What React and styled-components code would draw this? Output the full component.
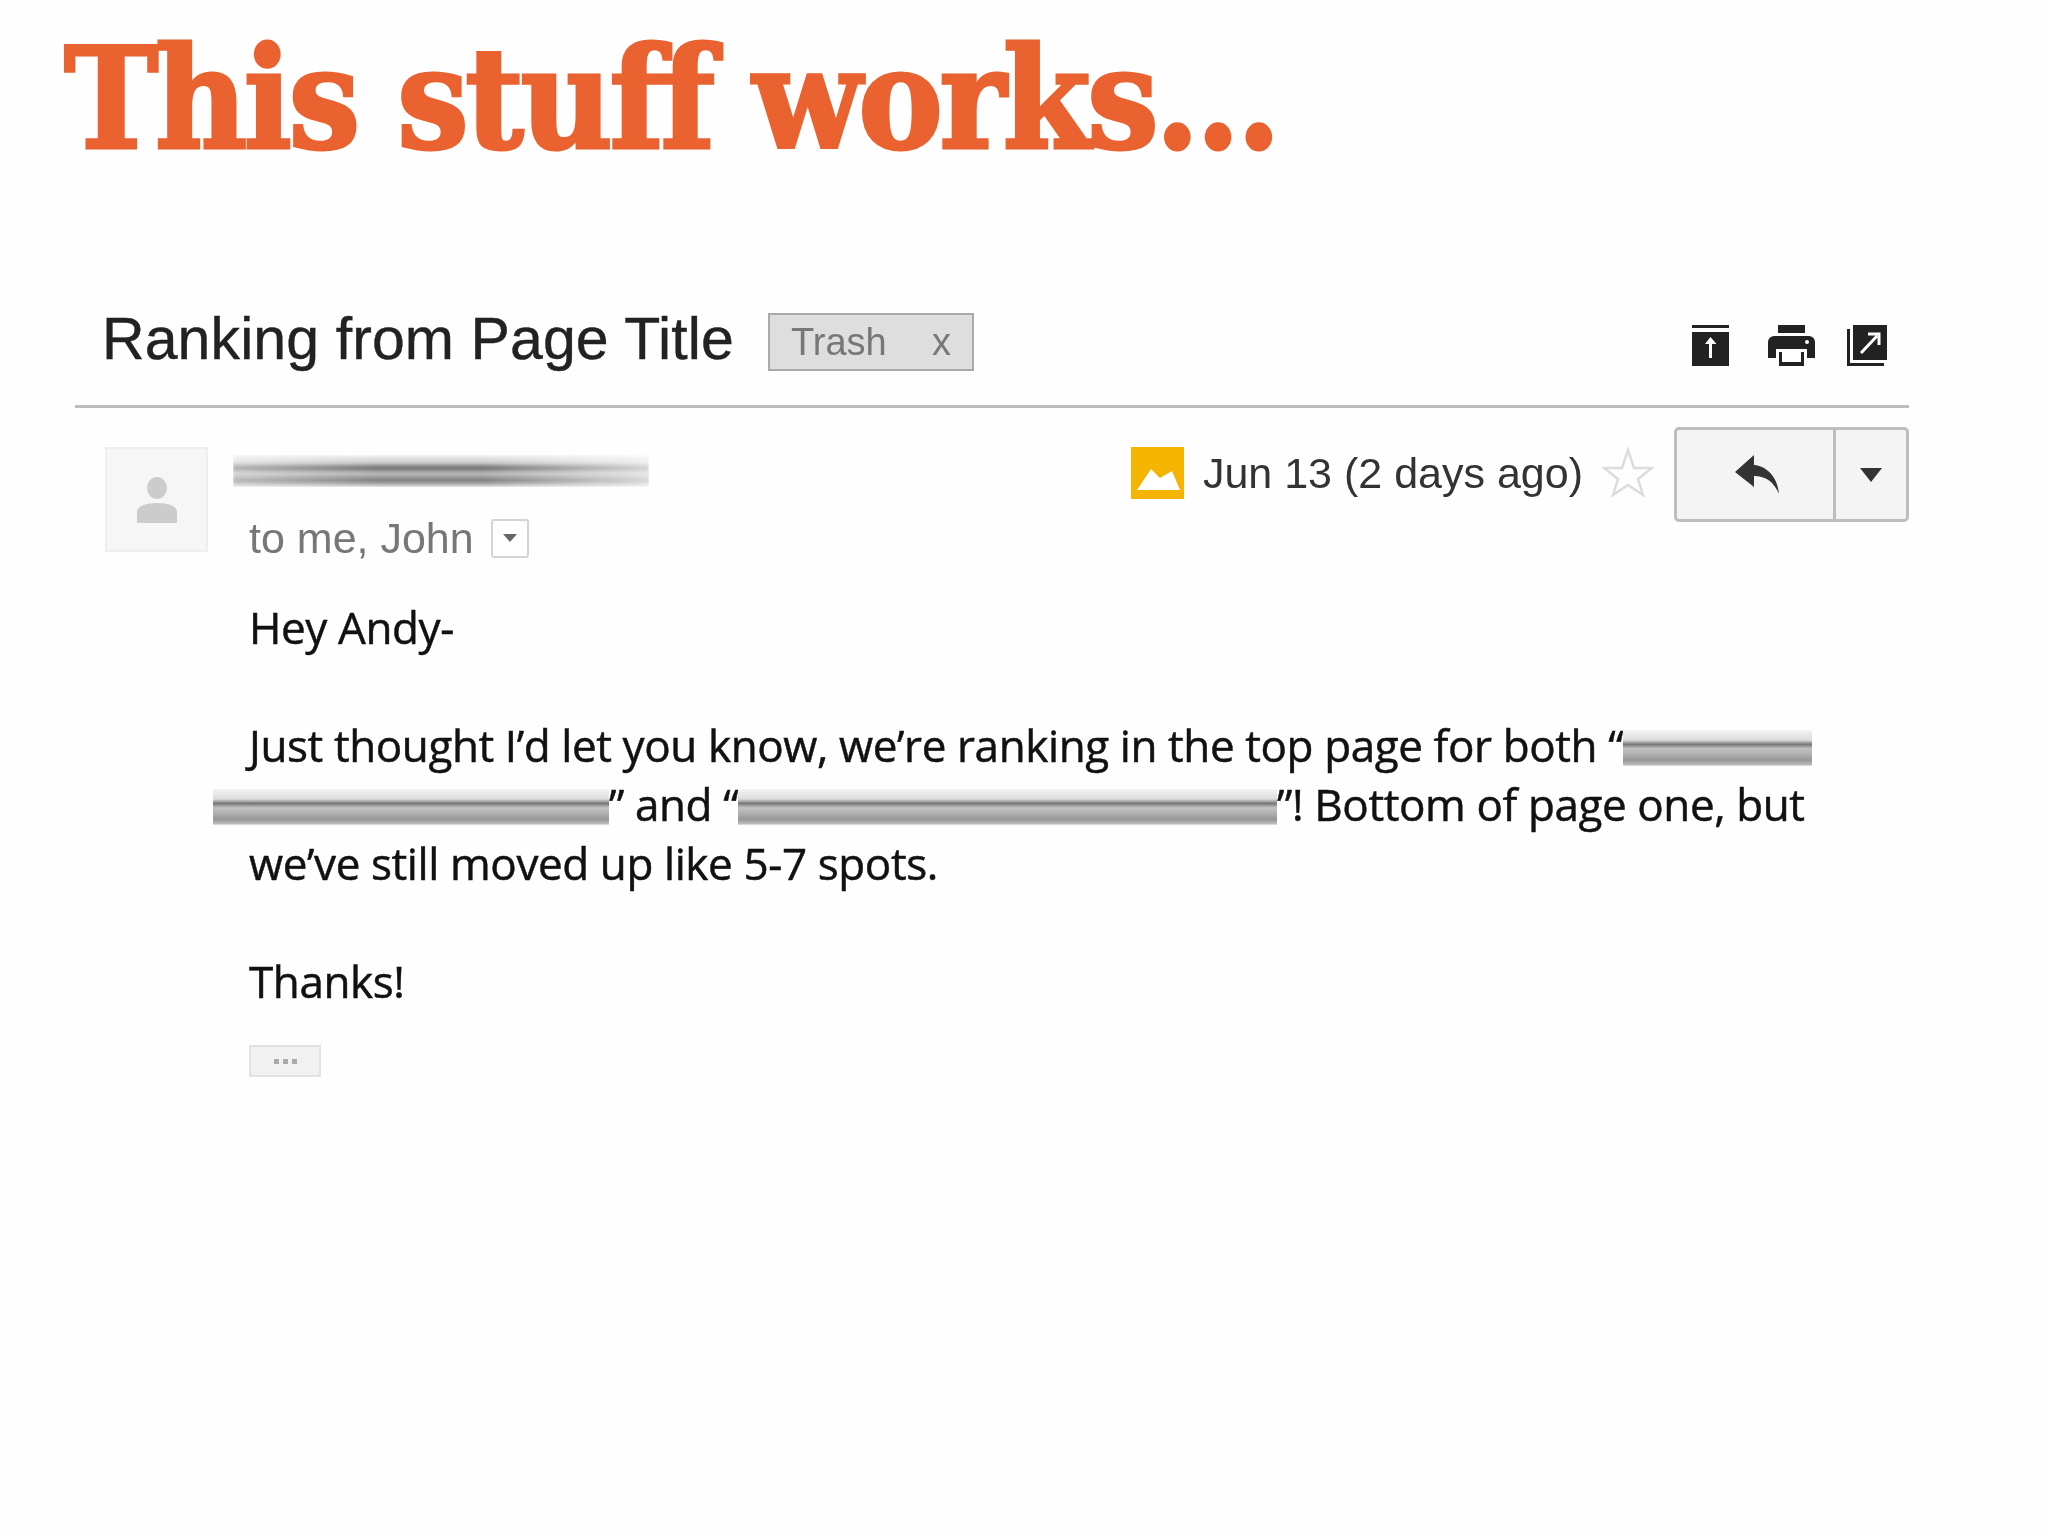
import React from "react";
import styled, { createGlobalStyle } from "styled-components";

const Global = createGlobalStyle`
  html, body { margin: 0; padding: 0; background: #fefefe; }
  body { width: 2048px; height: 1536px; overflow: hidden; font-family: "Liberation Sans", Arial, sans-serif; }
`;
const Page = styled.div`width: 2048px; height: 1536px; background: #fefefe; overflow: hidden;`;
const Title = styled.h1`
  margin: 0; height: 300px; padding: 0 0 0 64px; box-sizing: border-box;
  font-family: "DejaVu Serif", serif; font-stretch: condensed; font-weight: 700; font-size: 141px; line-height: 198px;
  color: #e9622f; -webkit-text-stroke: 3px #e9622f; letter-spacing: -3.4px; white-space: nowrap;
`;
const Email = styled.main`width: 1834px; margin-left: 75px; filter: blur(0.5px);`;
const SubjectRow = styled.header`
  display: flex; align-items: center; height: 84px; padding: 0 0 21px 27px; border-bottom: 3px solid #bcbcbc;
`;
const Subject = styled.h2`margin: -7px 0 0; font-size: 59px; font-weight: 400; color: #222; -webkit-text-stroke: 0.4px #222; letter-spacing: 0.1px; white-space: nowrap;`;
const Tag = styled.span`
  display: flex; justify-content: space-between; align-items: center; box-sizing: border-box;
  width: 206px; height: 58px; margin-left: 34px; padding: 0 21px; background: #dedede; border: 2px solid #aaa;
  font-size: 38px; color: #777;
`;
const Tools = styled.div`display: flex; align-items: flex-start; margin-left: auto; margin-right: 22px; padding-top: 6px;`;
const Tool = styled.svg`display: block; margin-left: ${p => p.$gap}px; fill: #222;`;
const Head = styled.section`display: flex; align-items: flex-start; height: 190px; padding-left: 30px;`;
const Avatar = styled.div`
  display: flex; align-items: center; justify-content: center; box-sizing: border-box;
  width: 103px; height: 105px; margin-top: 39px; background: #f6f6f7; border: 2px solid #eeeeee;
`;
const Sender = styled.div`margin: 47px 0 0 25px; display: flex; flex-direction: column;`;
const Recipients = styled.div`display: flex; align-items: center; margin: 26px 0 0 16px; font-size: 43px; color: #777; line-height: 50px; white-space: nowrap;`;
const Expand = styled.span`
  display: flex; align-items: center; justify-content: center; box-sizing: border-box; width: 38px; height: 39px; margin-left: 17px;
  border: 2px solid #d4d4d4; border-radius: 3px; background: #fff;
`;
const Caret = styled.i`
  display: block; width: 0; height: 0;
  border-left: ${p => p.$w}px solid transparent; border-right: ${p => p.$w}px solid transparent; border-top: ${p => p.$h}px solid ${p => p.$c};
`;
const Meta = styled.div`display: flex; align-items: flex-start; margin-left: auto; padding-top: 19px;`;
const DateBlock = styled.div`display: flex; align-items: center; height: 52px; margin-top: 20px; font-size: 43px; color: #333; white-space: nowrap;`;
const Photo = styled.svg`display: block; margin-right: 19px;`;
const Star = styled.svg`display: block; margin: 20px 20px 0 19px;`;
const Reply = styled.div`
  display: flex; box-sizing: border-box; width: 235px; height: 95px; background: #f4f4f5; border: 3px solid #bdbdbd; border-radius: 5px;
`;
const ReplyMain = styled.div`display: flex; align-items: center; justify-content: center; width: 159px; padding-left: 4px; box-sizing: border-box; border-right: 3px solid #bdbdbd;`;
const ReplyMore = styled.div`flex: 1; display: flex; align-items: center; justify-content: center;`;
const Body = styled.article`padding-left: 174px; font-family: "Open Sans", "Noto Sans", sans-serif; font-size: 44px; line-height: 59px; color: #111; -webkit-text-stroke: 0.5px #111; letter-spacing: -0.4px;`;
const Line = styled.p`margin: 0 0 ${p => (p.$gap ? 59 : 0)}px ${p => p.$out || 0}px; height: 59px; white-space: nowrap;`;
const Redaction = styled.span`
  display: inline-block; width: ${p => p.$w}px; height: 36px; vertical-align: -4px;
  background: linear-gradient(to bottom, #f4f4f4 0%, #dcdcdc 28%, #777 40%, #c2c2c2 52%, #adadad 70%, #969696 84%, #bdbdbd 97%, #eeeeee 100%);
  filter: blur(0.6px);
`;
const Trimmed = styled.div`
  display: flex; align-items: center; justify-content: center; gap: 4px; box-sizing: border-box; width: 72px; height: 32px; margin-top: 34px;
  background: #f1f1f1; border: 2px solid #e2e2e2;
`;
const Dot = styled.i`display: block; width: 5px; height: 5px; background: #aaa;`;
const SenderBlur = styled.div`
  width: 416px; height: 32px;
  background: linear-gradient(to bottom, #f2f2f2 0%, #c9c9c9 25%, #6d6d6d 40%, #bcbcbc 58%, #7c7c7c 80%, #dedede 100%);
  mask-image: linear-gradient(to right, rgba(0,0,0,.55), #000 35%, #000 60%, rgba(0,0,0,.3));
  filter: blur(1px);
`;

export default function App() {
  return (
    <Page>
      <Global />
      <Title>This stuff works...</Title>
      <Email>
        <SubjectRow>
          <Subject>Ranking from Page Title</Subject>
          <Tag><span>Trash</span><span>x</span></Tag>
          <Tools>
            <Tool $gap={0} width="37" height="41" viewBox="0 0 37 41">
              <path d="M0 0h37v3H0zM0 7h37v34H0z" />
              <path d="M18.5 12l6 7h-4.5v14h-3V19H13z" fill="#fff" />
            </Tool>
            <Tool $gap={39} width="47" height="41" viewBox="0 0 47 41">
              <path d="M10 0h27v8H10zM6 11h35a6 6 0 0 1 6 6v16H39v-9H8v9H0V17a6 6 0 0 1 6-6zM11 27h25v14H11z" />
              <path d="M14 27h19v10H14z" fill="#fff" />
              <circle cx="39" cy="17" r="2" fill="#fff" />
            </Tool>
            <Tool $gap={32} width="40" height="41" viewBox="0 0 40 41">
              <path d="M6 0h34v35H6z" />
              <path d="M0 4h3v34h34v3H0z" />
              <path d="M14 28l16-17M21 9h11v11" fill="none" stroke="#fff" strokeWidth="3" />
            </Tool>
          </Tools>
        </SubjectRow>
        <Head>
          <Avatar>
            <svg width="40" height="46" viewBox="0 0 40 46">
              <ellipse cx="20" cy="11" rx="10" ry="11" fill="#ccc" />
              <path d="M0 46V35c0-6 9-9 20-9s20 3 20 9v11z" fill="#ccc" />
            </svg>
          </Avatar>
          <Sender>
            <SenderBlur />
            <Recipients>to me, John<Expand><Caret $w={7} $h={8} $c="#666" /></Expand></Recipients>
          </Sender>
          <Meta>
            <DateBlock>
              <Photo width="53" height="52" viewBox="0 0 53 52">
                <path d="M0 0h53v52H0z" fill="#f4b400" />
                <path d="M6 43l14-21 9 9 12-7 8 19z" fill="#fff" />
              </Photo>
              Jun 13 (2 days ago)
            </DateBlock>
            <Star width="52" height="50" viewBox="0 0 52 50">
              <path d="M26 3l6 18h18L36 32l5 16-15-10-15 10 5-16L2 21h18z" fill="none" stroke="#dcdcdc" strokeWidth="2.5" />
            </Star>
            <Reply>
              <ReplyMain>
                <svg width="44" height="39" viewBox="0 0 44 39">
                  <path d="M19 0L0 17l19 15V21c12 0 20 6 25 18C43 24 33 11 19 10z" fill="#333" />
                </svg>
              </ReplyMain>
              <ReplyMore><Caret $w={11} $h={14} $c="#333" /></ReplyMore>
            </Reply>
          </Meta>
        </Head>
        <Body>
          <Line $gap>Hey Andy-</Line>
          <Line>Just thought I’d let you know, we’re ranking in the top page for both “<Redaction $w={189} /></Line>
          <Line $out={-36}><Redaction $w={396} />” and “<Redaction $w={539} />”! Bottom of page one, but</Line>
          <Line $gap>we’ve still moved up like 5-7 spots.</Line>
          <Line>Thanks!</Line>
          <Trimmed><Dot /><Dot /><Dot /></Trimmed>
        </Body>
      </Email>
    </Page>
  );
}
